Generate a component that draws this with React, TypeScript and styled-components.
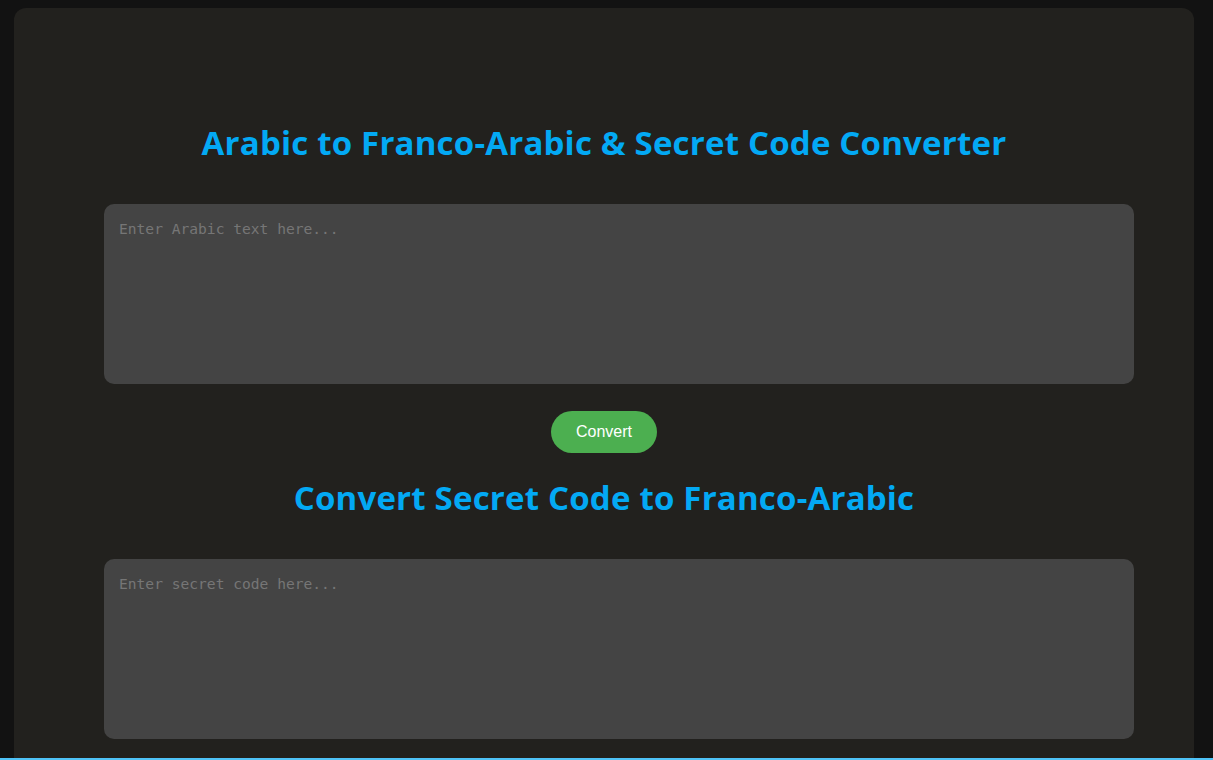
import React from "react";
import styled, { createGlobalStyle } from "styled-components";

const Global = createGlobalStyle`
  html, body { margin: 0; padding: 0; }
  body {
    background: #121212;
    font-family: "Liberation Sans", Arial, sans-serif;
    overflow: hidden;
  }
`;

const Page = styled.div`
  padding: 8px 19px 0 14px;
  min-height: 760px;
  box-sizing: border-box;
`;

const Card = styled.main`
  background: #22211e;
  border-radius: 12px;
  padding: 116px 90px 40px;
  display: flex;
  flex-direction: column;
  align-items: center;
`;

const Heading = styled.h1<{ $gapBelow: number }>`
  margin: 0 0 ${(p) => p.$gapBelow}px;
  font-family: "Open Sans", "Noto Sans", sans-serif;
  font-weight: 700;
  font-size: 33px;
  letter-spacing: 0.2px;
  line-height: 38px;
  color: #03a9f4;
  text-align: center;
`;

const Input = styled.textarea`
  box-sizing: content-box;
  align-self: stretch;
  width: 100%;
  height: 150px;
  border: none;
  outline: none;
  resize: none;
  border-radius: 10px;
  background: #444444;
  color: #e0e0e0;
  padding: 15px;
  font-family: "DejaVu Sans Mono", "Liberation Mono", monospace;
  font-size: 14.6px;
  line-height: 20px;
  &::placeholder { color: #767676; }
`;

const Button = styled.button`
  margin: 27px 0 26px;
  height: 42px;
  padding: 0 25px;
  border: none;
  border-radius: 21px;
  background: #4caf50;
  color: #ffffff;
  font-family: "Liberation Sans", Arial, sans-serif;
  font-size: 16px;
  cursor: pointer;
`;

const BottomLine = styled.div`
  position: fixed;
  left: 0;
  right: 0;
  bottom: 0;
  height: 2px;
  background: #4fc3f7;
`;

export default function App() {
  return (
    <>
      <Global />
      <Page>
        <Card>
          <Heading $gapBelow={42}>Arabic to Franco-Arabic &amp; Secret Code Converter</Heading>
          <Input placeholder="Enter Arabic text here..." />
          <Button>Convert</Button>
          <Heading as="h2" $gapBelow={42}>Convert Secret Code to Franco-Arabic</Heading>
          <Input placeholder="Enter secret code here..." />
        </Card>
      </Page>
      <BottomLine />
    </>
  );
}
